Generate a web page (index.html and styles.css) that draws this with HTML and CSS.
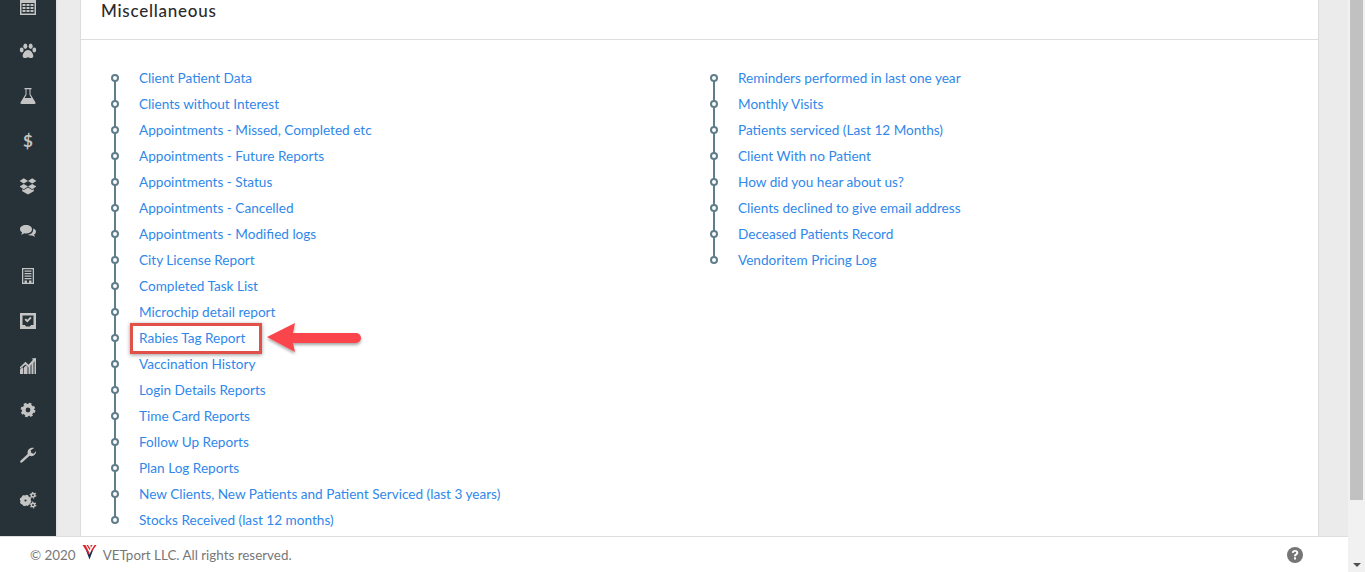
FILE: index.html
```html
<!DOCTYPE html>
<html lang="en">
<head>
<meta charset="utf-8">
<title>Miscellaneous Reports</title>
<link rel="stylesheet" href="styles.css">
</head>
<body>
<div class="page">
  <div class="top">
    <nav class="sidebar">
      <a class="nav-item"><svg class="icon" viewBox="0 0 18 18"><path d="M1 2h16v16H1z"/><path class="cut" d="M2.500 6h13v10.500h-13z"/><path d="M3.500 7h3v2h-3zM7.500 7h3v2h-3zM11.500 7h3v2h-3zM3.500 10h3v2h-3zM7.500 10h3v2h-3zM11.500 10h3v2h-3zM3.500 13h3v2h-3zM7.500 13h3v2h-3zM11.500 13h3v2h-3z"/></svg></a>
      <a class="nav-item"><svg class="icon" viewBox="0 0 18 18"><ellipse cx="2.700" cy="8" rx="1.900" ry="2.400"/><ellipse cx="6.300" cy="4.200" rx="2" ry="2.700"/><ellipse cx="11.700" cy="4.200" rx="2" ry="2.700"/><ellipse cx="15.300" cy="8" rx="1.900" ry="2.400"/><path d="M9 8c2.800 0 5.300 3.500 5.300 6 0 1.500-1 2-2.100 2-1.300 0-2.100-.8-3.200-.8s-1.900.8-3.200.8c-1.100 0-2.100-.5-2.100-2 0-2.500 2.500-6 5.300-6z"/></svg></a>
      <a class="nav-item"><svg class="icon" viewBox="0 0 18 18"><path d="M5.500 1h7v1.300h-1v5l4.900 8c.5.900 0 1.700-1 1.700H2.600c-1 0-1.500-.8-1-1.700l4.900-8v-5h-1zM7.500 2.300v5.500L5.600 11h6.800l-1.900-3.200V2.300z" fill-rule="evenodd"/></svg></a>
      <a class="nav-item dollar">$</a>
      <a class="nav-item"><svg class="icon" viewBox="0 0 18 18"><path d="M4.800 1.200 9 3.900 4.800 6.600.6 3.900zM13.200 1.200 17.400 3.900 13.200 6.600 9 3.900zM4.800 6.900 9 9.600 4.800 12.300.6 9.600zM13.200 6.900 17.400 9.600 13.200 12.300 9 9.600zM4.800 13l4.200-2.500 4.200 2.500 1.500-1v2.200L9 17.500l-5.700-3.300V12z"/></svg></a>
      <a class="nav-item"><svg class="icon" viewBox="0 0 18 18"><path d="M7 3c3.600 0 6 1.800 6 4.200s-2.400 4.200-6 4.200c-.6 0-1.200 0-1.800-.2-1 .8-2 1.200-3.300 1.400.7-.8 1.100-1.500 1.200-2.400C1.800 9.500 1 8.400 1 7.200 1 4.800 3.400 3 7 3z"/><path d="M14.200 6.500c1.700.6 2.800 1.800 2.800 3.300 0 1.100-.7 2.100-1.900 2.800.1.800.5 1.500 1.100 2.200-1.100-.2-2.200-.6-3-1.300-.5.100-.9.100-1.400.1-1.300 0-2.400-.3-3.300-.8 3.500-.1 6-2.200 5.700-6.300z"/></svg></a>
      <a class="nav-item"><svg class="icon" viewBox="0 0 18 18"><path d="M3 1h12v16H3zM4.300 2.300v13.400h9.400V2.300z" fill-rule="evenodd"/><path d="M5.500 3.500h7v1.300h-7zM5.500 6h7v1.300h-7zM5.500 8.500h7v1.300h-7zM5.500 11h7v1.300h-7zM5.500 13.500h2.500v2.500h-2.500zM10 13.500h2.500v2.500H10z"/></svg></a>
      <a class="nav-item"><svg class="icon" viewBox="0 0 18 18"><path d="M1 1h16v16H1zM3.500 3.500V13H6l1 1.500h4l1-1.500h2.500V3.500z" fill-rule="evenodd"/><path d="m5.500 7.800 1.500-1.400 1.300 1.300 3-3 1.400 1.400-4.400 4.400z"/></svg></a>
      <a class="nav-item"><svg class="icon" viewBox="0 0 18 18"><path d="M1 17v-4.500l2.300-2.300 1 1V17zM5 17v-6.500l2-2 1.500 1.500v7zM9.500 17V9.500l2-1.700V17zM12.500 17V6.800l2-2V17zM15.500 17V3.800H17V17z"/><path d="M1 10 6.500 4.800 9.500 7.800 14 2.800l-1.500-1.300L17 1V5.500l-1.300-1.300-6.200 6.300-3-3-5.500 4.300z"/></svg></a>
      <a class="nav-item"><svg class="icon gear small-gear" viewBox="0 0 18 18"><circle cx="9" cy="9" r="4.800"/><circle class="teeth" cx="9" cy="9" r="6.800"/></svg></a>
      <a class="nav-item"><svg class="icon" viewBox="0 0 18 18"><path d="M2.300 16.800c-.7-.1-1.200-.6-1.100-1.300 0-.3.200-.7.500-.9l7-6.600C8 5.500 9.300 2.800 11.700 2c1.200-.4 2.700-.4 3.500.1l-3.500 2.200.5 2.500 2.500.9 2.300-2.600c.2 2-.8 3.700-2.600 4.600-1.300.6-2.700.6-3.800.1l-7 6.300c-.2.200-.5.300-.8.300z"/></svg></a>
      <a class="nav-item"><svg class="icon gear" viewBox="0 0 18 18"><circle class="big" cx="6.500" cy="9.500" r="3.200"/><circle class="big-teeth" cx="6.500" cy="9.500" r="4.800"/><circle class="small" cx="14" cy="4.300" r="1.700"/><circle class="small-teeth" cx="14" cy="4.300" r="2.800"/><circle class="small" cx="14" cy="14" r="1.700"/><circle class="small-teeth" cx="14" cy="14" r="2.800"/></svg></a>
    </nav>
    <main class="main">
      <section class="card">
        <h2 class="card-title">Miscellaneous</h2>
        <div class="columns">
          <ul class="timeline">
            <li><a>Client Patient Data</a></li>
            <li><a>Clients without Interest</a></li>
            <li><a>Appointments - Missed, Completed etc</a></li>
            <li><a>Appointments - Future Reports</a></li>
            <li><a>Appointments - Status</a></li>
            <li><a>Appointments - Cancelled</a></li>
            <li><a>Appointments - Modified logs</a></li>
            <li><a>City License Report</a></li>
            <li><a>Completed Task List</a></li>
            <li><a>Microchip detail report</a></li>
            <li class="marked"><a>Rabies Tag Report</a>
              <svg class="callout-arrow" viewBox="0 0 100 36"><defs><filter id="sh" x="-10%" y="-30%" width="120%" height="170%"><feDropShadow dx="0" dy="2" stdDeviation="1.500" flood-color="#000" flood-opacity=".35"/></filter></defs><path filter="url(#sh)" d="M1 15 29 1 27 11H90a5 5 0 0 1 0 10H27L29 30z"/></svg>
            </li>
            <li><a>Vaccination History</a></li>
            <li><a>Login Details Reports</a></li>
            <li><a>Time Card Reports</a></li>
            <li><a>Follow Up Reports</a></li>
            <li><a>Plan Log Reports</a></li>
            <li><a>New Clients, New Patients and Patient Serviced (last 3 years)</a></li>
            <li><a>Stocks Received (last 12 months)</a></li>
          </ul>
          <ul class="timeline">
            <li><a>Reminders performed in last one year</a></li>
            <li><a>Monthly Visits</a></li>
            <li><a>Patients serviced (Last 12 Months)</a></li>
            <li><a>Client With no Patient</a></li>
            <li><a>How did you hear about us?</a></li>
            <li><a>Clients declined to give email address</a></li>
            <li><a>Deceased Patients Record</a></li>
            <li><a>Vendoritem Pricing Log</a></li>
          </ul>
        </div>
      </section>
    </main>
  </div>
  <footer class="footer">
    <span>© 2020</span>
    <svg class="logo" viewBox="0 0 15 16"><path class="logo-navy" d="M3.500 5 7.500 15.500 11.500 5 8.800 7.500 7.500 10.500 6.200 7.500z"/><path class="logo-red" d="M.5 1H3.500L7.800 9.500 6.800 10.500zM14.500 1H12.500L9 6.500 10 7.500zM4.500 1H6L8.500 5 7.500 6zM8.500 1H10.500L8.800 4z"/></svg>
    <span class="footer-text">VETport LLC. All rights reserved.</span>
    <svg class="help" viewBox="0 0 16 16"><circle cx="8" cy="8" r="8"/><path class="help-mark" d="M4.800 5.700C5 3.900 6.300 3 8 3c1.900 0 3.300 1.100 3.300 2.800 0 1.300-.8 1.900-1.600 2.400-.5.300-.7.500-.7 1.100H7c0-1.300.3-1.900 1.100-2.400.6-.4 1.100-.6 1.100-1.200 0-.6-.5-1-1.200-1-.8 0-1.200.4-1.300 1.200zM7 10.200h2V12.500H7z"/></svg>
  </footer>
</div>
<div class="scrollbar">
  <div class="thumb"></div>
  <div class="arrow-down"></div>
</div>
</body>
</html>
```
FILE: styles.css
```css
* { box-sizing: border-box; }
html, body { margin: 0; height: 100%; overflow: hidden; }
body {
  display: flex;
  height: 572px;
  font-family: Lato, "Open Sans", "Liberation Sans", sans-serif;
  font-size: 14px;
  background: #fff;
}
.page { flex: 0 0 1348px; display: flex; flex-direction: column; min-width: 0; }
.top { flex: 1; display: flex; min-height: 0; overflow: hidden; }

.sidebar {
  flex: 0 0 56px;
  background: #263238;
  display: flex;
  flex-direction: column;
  margin-top: -16px;
}
.nav-item {
  flex: 0 0 44.9px;
  display: flex;
  align-items: center;
  justify-content: center;
  color: #c4c4c4;
}
.dollar { font-size: 17px; font-weight: 700; padding-bottom: 2px; }
.icon { width: 18px; height: 18px; fill: #c4c4c4; }
.icon .cut { fill: #263238; }
.small-gear { width: 16px; height: 16px; }
.gear circle { fill: none; stroke: #c4c4c4; }
.gear > circle:first-child { stroke-width: 4.200; }
.teeth { stroke-width: 3; stroke-dasharray: 2.900 2.440; }
.gear .big { stroke-width: 2.800; }
.gear .big-teeth { stroke-width: 1.800; stroke-dasharray: 2 1.770; }
.gear .small { stroke-width: 1.500; }
.gear .small-teeth { stroke-width: 1.200; stroke-dasharray: 1.400 1.530; }

.main {
  flex: 1;
  background: #ebebeb;
  padding: 0 29px 0 24px;
  box-shadow: inset 2px 0 2px -1px #dcdcdc;
}
.card {
  height: 100%;
  background: #fff;
  border-left: 1px solid #dcdcdc;
  border-right: 1px solid #dcdcdc;
}
.card-title {
  margin: 0;
  height: 40px;
  padding: 0 0 0 20px;
  border-bottom: 1px solid #dedede;
  font-size: 17px;
  line-height: 21px;
  font-weight: 500;
  letter-spacing: .75px;
  color: #2b2b2b;
}
.columns {
  display: grid;
  grid-template-columns: 599px 1fr;
  padding: 25px 0 0 30px;
}
.timeline { list-style: none; margin: 0; padding: 0; }
.timeline li {
  position: relative;
  height: 26px;
  padding-left: 28px;
  line-height: 26px;
  white-space: nowrap;
}
.timeline li::before {
  content: "";
  position: absolute;
  left: 0;
  top: 9px;
  width: 4px;
  height: 4px;
  border: 2px solid #607d8b;
  border-radius: 50%;
  background: #fff;
  z-index: 1;
}
.timeline li:not(:last-child)::after {
  content: "";
  position: absolute;
  left: 3px;
  top: 13px;
  width: 2px;
  height: 26px;
  background: #607d8b;
}
.timeline a { color: #2f88ea; font-size: 13.6px; }
.marked a { position: relative; }
.marked a::after {
  content: "";
  position: absolute;
  left: -9px;
  right: -17px;
  top: -7px;
  bottom: -8px;
  border: 3px solid #e2504a;
  box-shadow: 0 1px 4px rgba(0,0,0,.4);
}
.callout-arrow {
  position: absolute;
  left: 155px;
  top: -3px;
  width: 100px;
  height: 36px;
  fill: #f9444c;
}

.footer {
  flex: 0 0 36px;
  display: flex;
  align-items: center;
  padding: 0 45px 0 30px;
  background: #fff;
  border-top: 1px solid #dedede;
  color: #777;
  font-size: 13.4px;
}
.logo { width: 15px; height: 16px; margin: -6px 6px 0 6px; }
.logo-navy { fill: #1f2b52; }
.logo-red { fill: #d8262f; }
.footer-text { flex: 1; }
.help { width: 16px; height: 16px; fill: #757575; }
.help .help-mark { fill: #fff; }

.scrollbar {
  flex: 1;
  position: relative;
  background: #f1f1f1;
  display: flex;
  flex-direction: column;
  align-items: center;
}
.thumb { width: 13px; height: 500px; background: #c1c1c1; }
.arrow-down {
  margin-top: auto;
  margin-bottom: 5px;
  border: 4px solid transparent;
  border-top: 4px solid #505050;
  border-bottom: 0;
}
```
